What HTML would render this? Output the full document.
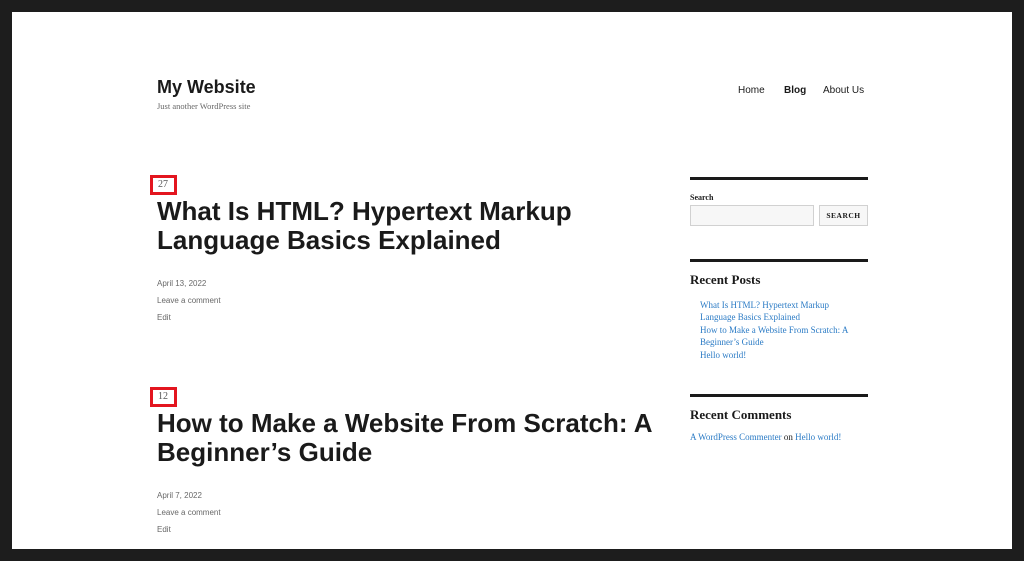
<!DOCTYPE html>
<html><head><meta charset="utf-8"><style>
body{margin:0;width:1024px;height:561px;background:#1d1d1d;position:relative;overflow:hidden;font-family:"Liberation Sans",sans-serif;}
#pg{position:absolute;left:12px;top:12px;width:1000px;height:537px;background:#fff;}
.a{position:absolute;white-space:nowrap;}
.serif{font-family:"Liberation Serif",serif;}
.h{font-weight:bold;font-size:26px;line-height:29px;color:#1a1a1a;letter-spacing:0px;}
.meta{font-size:8px;color:#686868;}
.box{position:absolute;border:3px solid #e3151f;width:21px;height:14px;font-family:"Liberation Serif",serif;font-size:10px;color:#555;line-height:14px;}
.rule{position:absolute;left:690px;width:178px;height:3px;background:#1a1a1a;}
.lk{color:#2b7bc5;}
</style></head><body><div id="pg"></div>
<div class="a" style="left:157px;top:77px;font-size:18px;font-weight:bold;color:#1a1a1a;">My Website</div>
<div class="a serif" style="left:157px;top:101px;font-size:8.5px;color:#686868;">Just another WordPress site</div>
<div class="a" style="left:738px;top:85px;font-size:10px;color:#1a1a1a;">Home</div>
<div class="a" style="left:784px;top:85px;font-size:10px;font-weight:bold;color:#1a1a1a;">Blog</div>
<div class="a" style="left:823px;top:85px;font-size:10px;color:#1a1a1a;">About Us</div>

<div class="box" style="left:150px;top:175px;"><span style="padding-left:5px">27</span></div>
<div class="a h" style="left:157px;top:197px;">What Is HTML? Hypertext Markup<br>Language Basics Explained</div>
<div class="a meta" style="left:157px;top:279px;">April 13, 2022</div>
<div class="a meta" style="left:157px;top:296px;">Leave a comment</div>
<div class="a meta" style="left:157px;top:313px;">Edit</div>

<div class="box" style="left:150px;top:387px;"><span style="padding-left:5px">12</span></div>
<div class="a h" style="left:157px;top:409px;">How to Make a Website From Scratch: A<br>Beginner’s Guide</div>
<div class="a meta" style="left:157px;top:491px;">April 7, 2022</div>
<div class="a meta" style="left:157px;top:508px;">Leave a comment</div>
<div class="a meta" style="left:157px;top:525px;">Edit</div>

<div class="rule" style="top:177px;"></div>
<div class="a serif" style="left:690px;top:193px;font-size:8px;font-weight:bold;color:#1a1a1a;">Search</div>
<div class="a" style="left:690px;top:205px;width:122px;height:19px;border:1px solid #d1d1d1;background:#f7f7f7;"></div>
<div class="a serif" style="left:819px;top:205px;width:47px;height:19px;border:1px solid #d1d1d1;background:#f7f7f7;font-size:7.5px;font-weight:bold;letter-spacing:0.5px;color:#1a1a1a;text-align:center;line-height:19px;">SEARCH</div>
<div class="rule" style="top:259px;"></div>
<div class="a serif" style="left:690px;top:272px;font-size:13px;font-weight:bold;color:#1a1a1a;">Recent Posts</div>
<div class="a serif lk" style="left:700px;top:299px;font-size:9px;line-height:12.4px;">What Is HTML? Hypertext Markup<br>Language Basics Explained<br>How to Make a Website From Scratch: A<br>Beginner’s Guide<br>Hello world!</div>
<div class="rule" style="top:394px;"></div>
<div class="a serif" style="left:690px;top:407px;font-size:13px;font-weight:bold;color:#1a1a1a;">Recent Comments</div>
<div class="a serif" style="left:690px;top:432px;font-size:9px;color:#1a1a1a;"><span class="lk">A WordPress Commenter</span> on <span class="lk">Hello world!</span></div>
</body></html>
